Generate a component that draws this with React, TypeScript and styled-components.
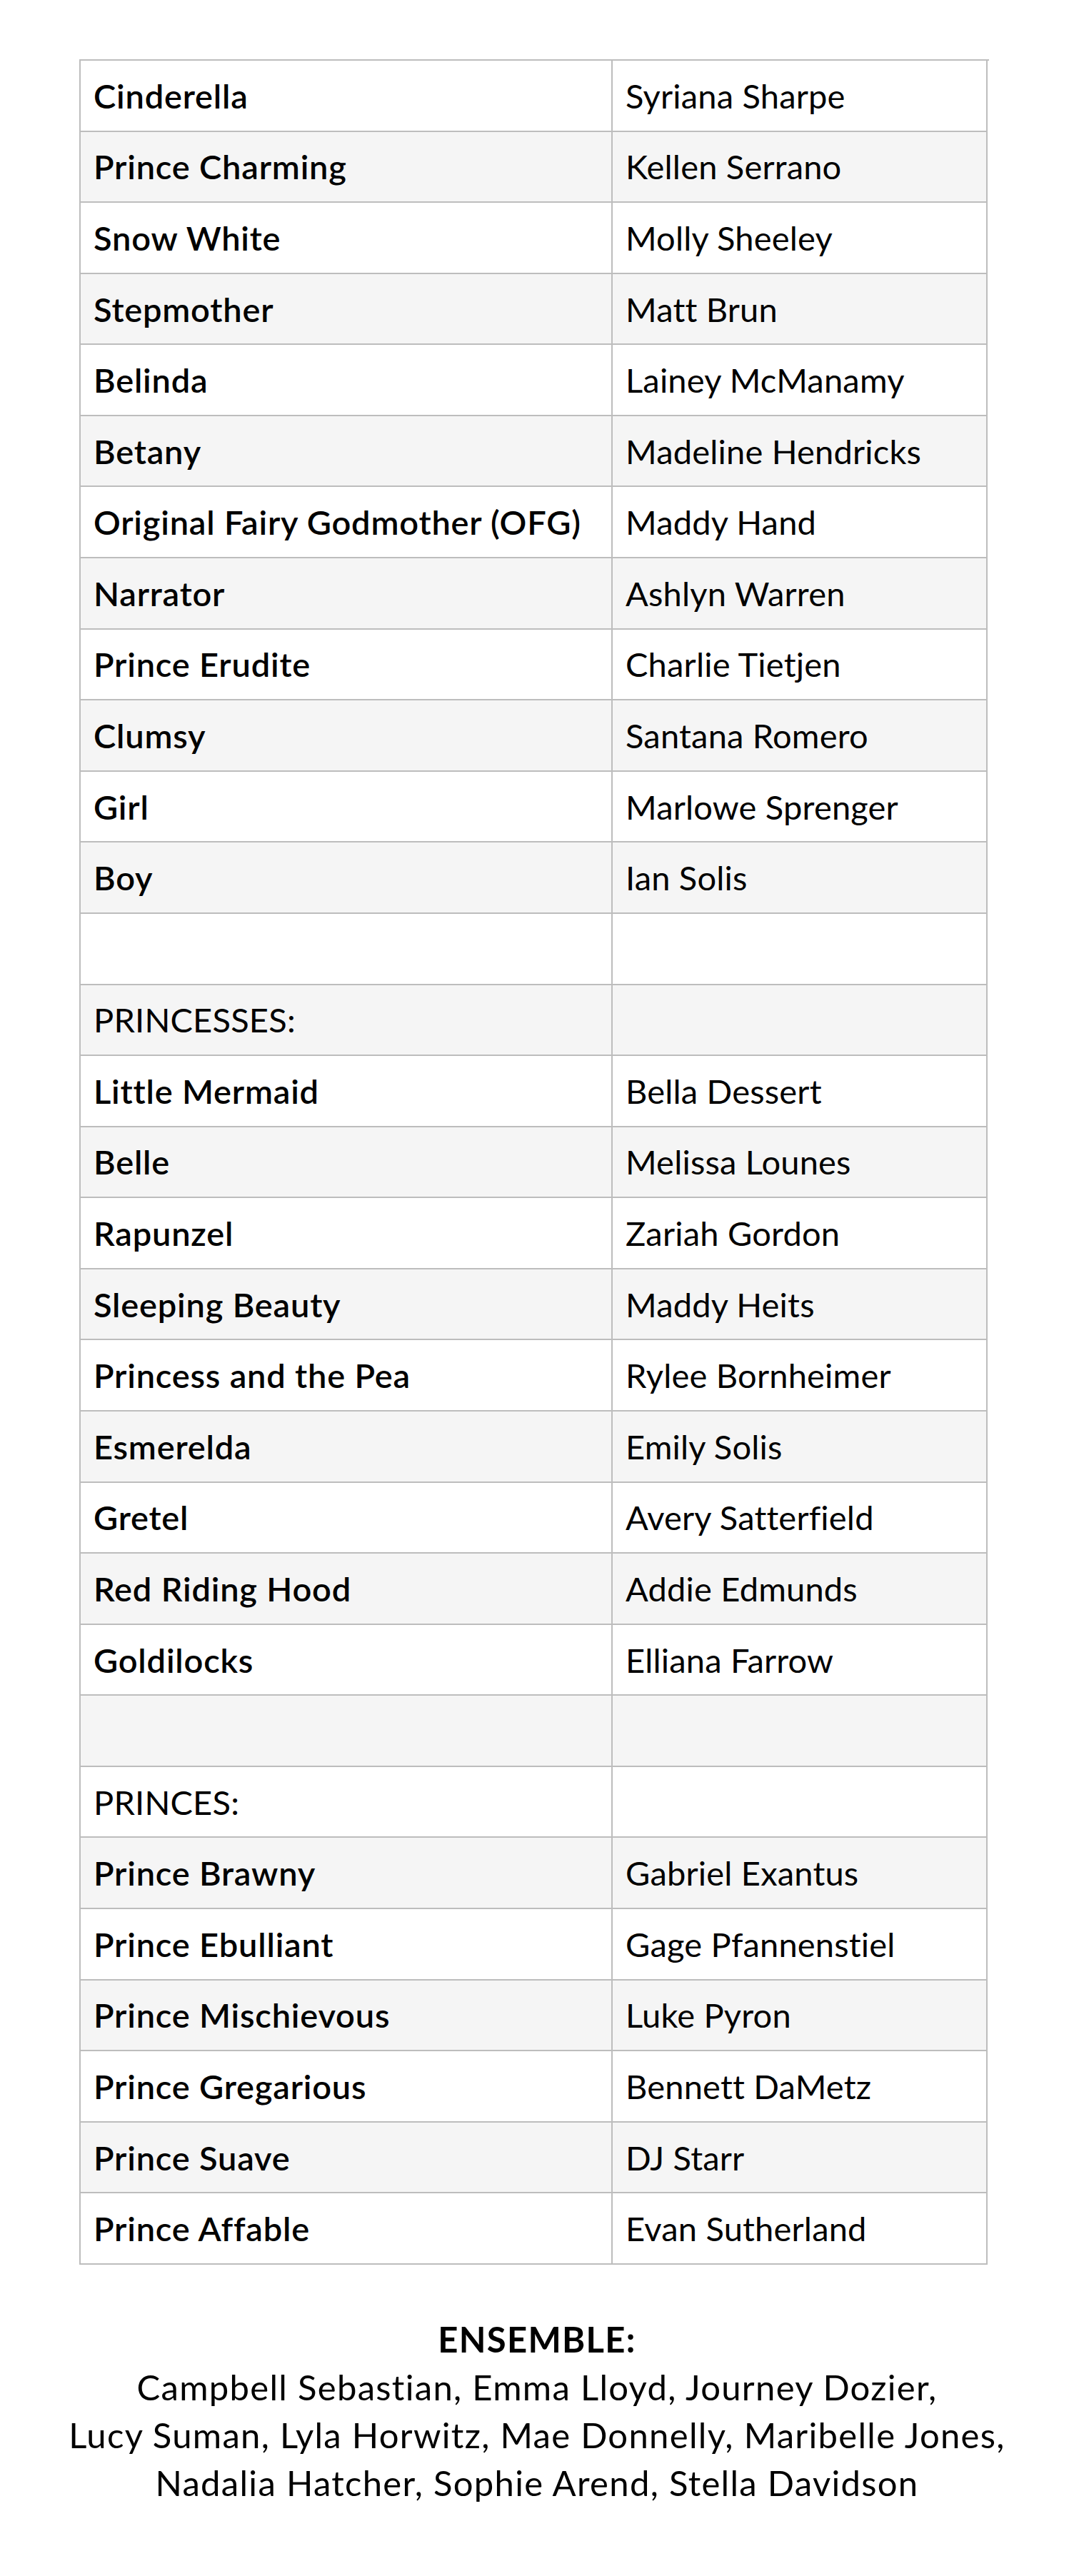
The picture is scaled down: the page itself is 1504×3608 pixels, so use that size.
import React from "react";
import styled, { createGlobalStyle } from "styled-components";

type Kind = "role" | "heading" | "blank";

interface CastRow {
  part: string;
  actor: string;
  kind: Kind;
}

const role = (part: string, actor: string): CastRow => ({ part, actor, kind: "role" });
const heading = (part: string): CastRow => ({ part, actor: "", kind: "heading" });
const blank: CastRow = { part: "", actor: "", kind: "blank" };

const CAST: CastRow[] = [
  role("Cinderella", "Syriana Sharpe"),
  role("Prince Charming", "Kellen Serrano"),
  role("Snow White", "Molly Sheeley"),
  role("Stepmother", "Matt Brun"),
  role("Belinda", "Lainey McManamy"),
  role("Betany", "Madeline Hendricks"),
  role("Original Fairy Godmother (OFG)", "Maddy Hand"),
  role("Narrator", "Ashlyn Warren"),
  role("Prince Erudite", "Charlie Tietjen"),
  role("Clumsy", "Santana Romero"),
  role("Girl", "Marlowe Sprenger"),
  role("Boy", "Ian Solis"),
  blank,
  heading("PRINCESSES:"),
  role("Little Mermaid", "Bella Dessert"),
  role("Belle", "Melissa Lounes"),
  role("Rapunzel", "Zariah Gordon"),
  role("Sleeping Beauty", "Maddy Heits"),
  role("Princess and the Pea", "Rylee Bornheimer"),
  role("Esmerelda", "Emily Solis"),
  role("Gretel", "Avery Satterfield"),
  role("Red Riding Hood", "Addie Edmunds"),
  role("Goldilocks", "Elliana Farrow"),
  blank,
  heading("PRINCES:"),
  role("Prince Brawny", "Gabriel Exantus"),
  role("Prince Ebulliant", "Gage Pfannenstiel"),
  role("Prince Mischievous", "Luke Pyron"),
  role("Prince Gregarious", "Bennett DaMetz"),
  role("Prince Suave", "DJ Starr"),
  role("Prince Affable", "Evan Sutherland"),
];

const ENSEMBLE = [
  "Campbell Sebastian, Emma Lloyd, Journey Dozier,",
  "Lucy Suman, Lyla Horwitz, Mae Donnelly, Maribelle Jones,",
  "Nadalia Hatcher, Sophie Arend, Stella Davidson",
];

const GlobalStyle = createGlobalStyle`
  html, body {
    margin: 0;
    padding: 0;
    background: #ffffff;
  }

  body {
    font-family: Lato, "Liberation Sans", sans-serif;
    color: #000000;
  }
`;

const Page = styled.main`
  width: 1504px;
  min-height: 3608px;
  box-sizing: border-box;
  padding-top: 83px;
`;

const CastTable = styled.div`
  display: grid;
  grid-template-columns: 745px 525px;
  grid-auto-rows: 99.58px;
  width: 1272px;
  margin-left: 111px;
  border-top: 2px solid #bdbdbd;
  border-left: 2px solid #bdbdbd;
`;

const Cell = styled.div<{ $shaded: boolean; $strong: boolean }>`
  display: flex;
  align-items: center;
  box-sizing: border-box;
  padding: 0 17px 0 18px;
  background: ${(p) => (p.$shaded ? "#f5f5f5" : "#ffffff")};
  border-right: 2px solid #bdbdbd;
  border-bottom: 2px solid #bdbdbd;
  font-size: 47px;
  font-weight: ${(p) => (p.$strong ? 600 : 400)};
  letter-spacing: ${(p) => (p.$strong ? "0.8px" : "0.2px")};
  white-space: nowrap;
`;

const Ensemble = styled.section`
  margin-top: 71px;
  text-align: center;
  font-size: 49px;
  line-height: 67px;
  letter-spacing: 1.3px;
`;

const EnsembleTitle = styled.div`
  font-weight: 700;
`;

const EnsembleLine = styled.div`
  font-weight: 400;
`;

export default function App() {
  return (
    <>
      <GlobalStyle />
      <Page>
        <CastTable>
          {CAST.map((row, i) => {
            const shaded = i % 2 === 1;
            return (
              <React.Fragment key={i}>
                <Cell $shaded={shaded} $strong={row.kind === "role"}>
                  {row.part}
                </Cell>
                <Cell $shaded={shaded} $strong={false}>
                  {row.actor}
                </Cell>
              </React.Fragment>
            );
          })}
        </CastTable>

        <Ensemble>
          <EnsembleTitle>ENSEMBLE:</EnsembleTitle>
          {ENSEMBLE.map((line) => (
            <EnsembleLine key={line}>{line}</EnsembleLine>
          ))}
        </Ensemble>
      </Page>
    </>
  );
}
